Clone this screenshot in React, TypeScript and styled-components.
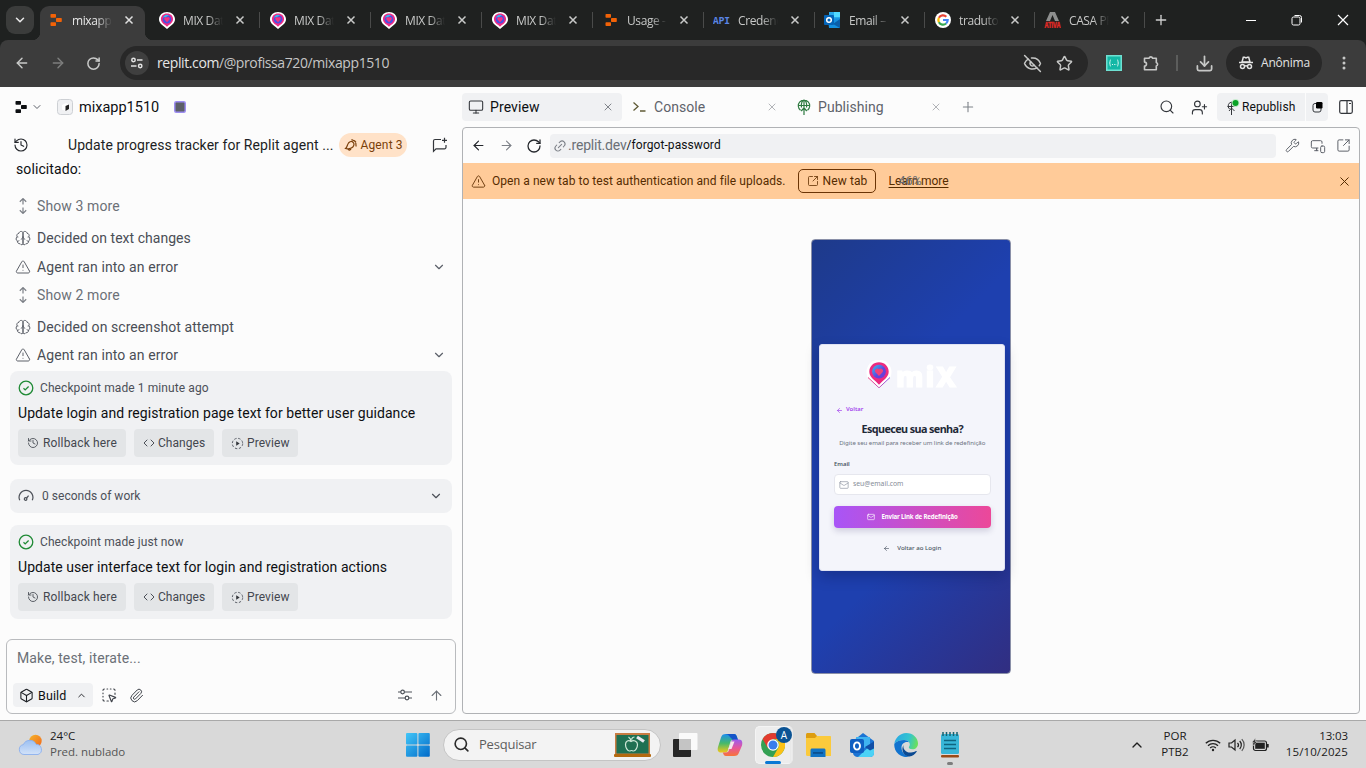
import React from "react";
import styled, { createGlobalStyle } from "styled-components";
import {
  ArrowLeft, ArrowRight, ArrowUp, Box, ChevronDown, ChevronUp, Download, EyeOff, History, Link2, Mail,
  Monitor, MonitorSmartphone, Paperclip, Plus, RotateCw, Search, SquareArrowOutUpRight,
  SquareDashedMousePointer, Star, TriangleAlert, UserPlus, Wrench, X, Code,
} from "lucide-react";

const UI = `Roboto, "Noto Sans", sans-serif`;
const SEGOE = `"Open Sans", "Noto Sans", sans-serif`;

const Global = createGlobalStyle`
  * { box-sizing: border-box; }
  html, body { margin: 0; padding: 0; overflow: hidden; }
  body { font-family: ${UI}; background: #fcfcfc; }
  svg { display: block; flex: none; }
`;

const Screen = styled.div`
  width: 1366px; height: 768px; display: flex; flex-direction: column; background: #fcfcfc; overflow: hidden;
`;
const T = styled.span<{ $s?: number; $c?: string; $ls?: number; $w?: number; $ml?: number; $dy?: number }>`
  font-size: ${p => p.$s ?? 14}px; color: ${p => p.$c ?? "#0d0f12"}; letter-spacing: ${p => p.$ls ?? 0}px;
  font-weight: ${p => p.$w ?? 400}; margin-left: ${p => p.$ml ?? 0}px; margin-top: ${p => p.$dy ?? 0}px;
  white-space: pre; line-height: 1.2; flex: none;
`;
const Spacer = styled.div`flex: 1;`;
const Gap = styled.div<{ $w: number }>`width: ${p => p.$w}px; flex: none;`;

/* ---------- browser chrome ---------- */
const TabStrip = styled.div`
  height: 40px; background: #1f2120; display: flex; align-items: center; flex: none; font-family: ${SEGOE};
`;
const TabSearch = styled.div`
  width: 28px; height: 28px; margin: 0 6px; border-radius: 9px; background: #3b3c3b; display: flex; align-items: center; justify-content: center;
`;
const ActiveTab = styled.div`
  width: 105px; height: 34px; align-self: flex-end; background: #3c3c3c; border-radius: 9px 9px 0 0; display: flex;
  align-items: center; padding: 0 0 6px 8px; position: relative;
  &::before, &::after {
    content: ""; position: absolute; bottom: 0; width: 8px; height: 8px;
  }
  &::before { left: -8px; background: radial-gradient(circle at 0 0, transparent 8px, #3c3c3c 8.5px); }
  &::after { right: -8px; background: radial-gradient(circle at 100% 0, transparent 8px, #3c3c3c 8.5px); }
`;
const Tab = styled.div<{ $w: number }>`
  width: ${p => p.$w}px; height: 28px; display: flex; align-items: center; padding-left: 9px;
`;
const TabTitle = styled.span<{ $on?: boolean }>`
  width: 40px; margin-left: 8px; overflow: hidden; white-space: nowrap; font-size: 12px; line-height: 18px;
  letter-spacing: -0.4px; color: ${p => (p.$on ? "#e8e8e8" : "#c7c8c7")}; padding-top: 1px;
  mask-image: linear-gradient(90deg, #000 60%, transparent 100%);
`;
const TabSep = styled.div`width: 1px; height: 16px; background: #4a4b4a; margin-left: auto;`;
const Toolbar = styled.div`
  height: 47px; background: #1f2120; flex: none; font-family: ${SEGOE};
`;
const ToolbarInner = styled.div`
  height: 47px; background: #3c3c3c; border-radius: 8px 8px 0 0; display: flex; align-items: center; padding: 0 0 1px 14px;
`;
const Omnibox = styled.div`
  width: 968px; height: 34px; border-radius: 17px; background: #282828; display: flex; align-items: center;
  padding: 0 15px 0 5px; margin-left: 17px;
`;
const SiteChip = styled.div`
  width: 24px; height: 24px; border-radius: 12px; background: #3f3f3f; display: flex; align-items: center; justify-content: center;
`;
const Incognito = styled.div`
  width: 96px; height: 34px; border-radius: 17px; background: #282828; display: flex; align-items: center; padding-left: 12px;
`;

/* ---------- app ---------- */
const Body = styled.div`height: 633px; display: flex; flex: none; background: #fcfcfc;`;
const Left = styled.div`width: 462px; display: flex; flex-direction: column; flex: none;`;
const Right = styled.div`flex: 1; display: flex; flex-direction: column;`;
const TopBar = styled.div`height: 40px; display: flex; align-items: center; flex: none;`;
const ChatHeader = styled.div`height: 34px; display: flex; align-items: center; padding: 2px 14px 0 13px; flex: none;`;
const AgentBadge = styled.div`
  height: 24px; width: 68px; border-radius: 12px; background: #ffe2c8; display: flex; align-items: center; padding-left: 5px; margin-left: 6px;
`;
const Line = styled.div`height: 16px; padding-left: 16px; display: flex; align-items: center; flex: none;`;
const FeedRow = styled.div<{ $mt: number }>`
  height: 24px; margin-top: ${p => p.$mt}px; padding: 0 16px 0 15px; display: flex; align-items: center; flex: none; color: #5c6069;
`;
const Card = styled.div<{ $mt: number }>`
  width: 442px; height: 94px; margin: ${p => p.$mt}px 0 0 10px; border-radius: 8px; background: #f0f1f3; padding: 8px;
  display: flex; flex-direction: column; flex: none;
`;
const CardHead = styled.div`height: 18px; display: flex; align-items: center;`;
const CardTitle = styled.div`height: 20px; margin-top: 6px; display: flex; align-items: center;`;
const CardActions = styled.div`height: 28px; margin-top: 6px; display: flex; gap: 8px;`;
const ActionButton = styled.div<{ $w: number }>`
  width: ${p => p.$w}px; height: 28px; border-radius: 4px; background: #e3e5e7; display: flex; align-items: center;
  padding-left: 9px; color: #4c5058;
`;
const WorkCard = styled.div`
  width: 442px; height: 34px; margin: 14px 0 0 10px; border-radius: 8px; background: #f0f1f3; display: flex; align-items: center;
  padding: 0 9px 0 8px; flex: none; color: #4c5058;
`;
const Composer = styled.div`
  width: 450px; height: 75px; margin: 20px 0 0 6px; border: 1px solid #b9bbbe; border-radius: 6px; padding: 10px 11px 6px 6px;
  display: flex; flex-direction: column; justify-content: space-between; flex: none;
`;
const ComposerBar = styled.div`height: 24px; display: flex; align-items: center; color: #3f434a;`;
const BuildButton = styled.div`
  width: 80px; height: 24px; border-radius: 4px; background: #f0f1f3; display: flex; align-items: center; padding-left: 6px; color: #1c1f24;
`;
const PaneTab = styled.div<{ $on?: boolean; $w: number; $p: number }>`
  width: ${p => p.$w}px; height: 28px; border-radius: 4px; background: ${p => (p.$on ? "#f0f1f3" : "transparent")};
  display: flex; align-items: center; padding: 0 ${p => p.$p}px 0 6px; color: ${p => (p.$on ? "#33363b" : "#a4a7ab")};
`;
const Publish = styled.div<{ $w: number; $side: "l" | "r" }>`
  width: ${p => p.$w}px; height: 28px; background: #f0f1f3; display: flex; align-items: center; color: #0d0f12;
  border-radius: ${p => (p.$side === "l" ? "4px 0 0 4px" : "0 4px 4px 0")}; padding-left: ${p => (p.$side === "l" ? 9 : 6)}px;
`;
const Pane = styled.div`
  width: 898px; height: 587px; border: 1px solid #b0b2b5; border-radius: 4px; display: flex; flex-direction: column; overflow: hidden;
`;
const PaneBar = styled.div`height: 35px; display: flex; align-items: center; padding: 0 8px; flex: none; color: #24272c;`;
const Address = styled.div`
  width: 726px; height: 24px; border-radius: 4px; background: #f0f1f3; display: flex; align-items: center; padding-left: 3px; color: #7d8188;
`;
const LinkGlyph = styled(Link2)`transform: rotate(-45deg);`;
const Banner = styled.div`
  height: 36px; background: #ffcb99; display: flex; align-items: center; padding: 0 7px 0 8px; color: #6b3a0c; flex: none;
`;
const NewTab = styled.div`
  width: 78px; height: 24px; border: 1px solid #6b3405; border-radius: 5px; display: flex; align-items: center; padding-left: 8px; margin-left: 12px;
`;
const Learn = styled.div`
  position: relative; margin: 1px 0 0 13px; text-decoration: underline; color: #562c00; text-underline-offset: 2px; height: 16px; display: flex;
`;
const ZoomLabel = styled.span`
  position: absolute; left: 10px; top: -1px; font-size: 12.5px; line-height: 16px; color: #6a6e75; display: inline-block;
`;
const Stage = styled.div`flex: 1; padding: 40px 0 0 348px;`;

/* ---------- phone preview ---------- */
const Phone = styled.div`
  width: 200px; height: 435px; border-radius: 4px; border: 1px solid #8a90a8; padding: 104px 5px 0 7px;
  background: linear-gradient(135deg, #1e3a8a 0%, #1e40af 36%, #1e40af 64%, #312e81 100%);
  font-family: "Noto Sans", sans-serif;
`;
const FormCard = styled.div`
  width: 186px; height: 227px; border-radius: 3px; background: #f4f5fb; border: 1px solid #dfe2f2; padding: 14px 13.5px 0 14px;
  display: flex; flex-direction: column; box-shadow: 0 6px 14px rgba(10, 15, 60, .28);
`;
const LogoRow = styled.div`height: 32px; display: flex; align-items: center; padding-left: 32px;`;
const Wordmark = styled.span`
  font-family: "Open Sans", sans-serif; font-weight: 800; font-size: 29px; line-height: 30px; color: #fff; margin: 1px 0 0 4px;
  letter-spacing: 2px; -webkit-text-stroke: 1px #fff; transform: scaleX(.95); transform-origin: left;
`;
const BackRow = styled.div`height: 10px; margin-top: 14px; display: flex; align-items: center; color: #a344ee; padding-left: 2px;`;
const FormRow = styled.div<{ $mt: number; $h: number; $left?: boolean }>`
  height: ${p => p.$h}px; margin-top: ${p => p.$mt}px; display: flex; align-items: center; justify-content: ${p => (p.$left ? "flex-start" : "center")}; color: #4b5563;
`;
const Field = styled.div`
  height: 21px; margin-top: 4px; border: 1px solid #e6e7ee; border-radius: 4px; background: #fff; display: flex; align-items: center; padding-left: 4px; color: #8c93a0;
`;
const Submit = styled.div`
  height: 22px; margin-top: 11px; border-radius: 4px; background: linear-gradient(90deg, #a855f7, #ec4899); display: flex; align-items: center;
  padding-left: 33px; color: #fff; box-shadow: 0 3px 6px rgba(40, 30, 90, .18);
`;

/* ---------- taskbar ---------- */
const Taskbar = styled.div`
  height: 48px; background: #d9d9d9; border-top: 1px solid #a9a9a9; display: flex; align-items: center; flex: none; font-family: ${SEGOE};
`;
const Stack = styled.div<{ $w: number; $a: string }>`
  width: ${p => p.$w}px; display: flex; flex-direction: column; align-items: ${p => p.$a}; gap: 2px; margin-top: -2px; flex: none;
`;
const SearchPill = styled.div`
  width: 218px; height: 32px; border-radius: 16px; background: #f3f3f3; border: 1px solid #c4c4c4; margin-left: 13px; display: flex; align-items: center; padding: 0 9px 0 9px; flex: none;
`;
const ChromeSlot = styled.div`
  width: 38px; height: 38px; border-radius: 5px; background: #ededed; border: 1px solid #f4f4f4; border-right: 3px double #e9e9e9;
  margin-left: 12px; position: relative; display: flex; align-items: center; justify-content: center; flex: none;
`;
const Indicator = styled.div<{ $w: number; $c: string }>`
  position: absolute; bottom: -1px; left: calc(50% - ${p => p.$w / 2}px); width: ${p => p.$w}px; height: 3px; border-radius: 2px; background: ${p => p.$c};
`;
const Badge = styled.div`
  position: absolute; left: 20px; top: 0; width: 16px; height: 16px; border-radius: 8px; background: #0b5394; color: #fff;
  font-size: 10px; line-height: 16px; text-align: center;
`;
const NoteSlot = styled.div`position: relative; width: 24px; height: 38px; margin-left: 20px; display: flex; align-items: center; justify-content: center;`;

/* ---------- drawings ---------- */
const ReplitMark = ({ c, s = 12 }: { c: string; s?: number }) => (
  <svg width={s} height={s} viewBox="0 0 12 12" fill={c}>
    <rect x="0.5" y="0" width="5.5" height="3.8" rx=".7" /><rect x="6" y="4.1" width="5.8" height="3.8" rx=".7" /><rect x="0.5" y="8.2" width="5.5" height="3.8" rx=".7" />
  </svg>
);
const MixPin = () => (
  <svg width="16" height="17" viewBox="0 0 16 17">
    <path d="M8 0C3.5 0 0 3.200 0 7.200c0 3.500 2.500 5.400 5 7.300L8 17l3-2.500c2.500-1.900 5-3.800 5-7.300C16 3.200 12.500 0 8 0z" fill="#fff" />
    <path d="M8 1.600C4.500 1.600 1.900 4 1.900 7.200c0 2.700 2 4.200 4.200 5.900L8 14.800l1.900-1.700c2.200-1.700 4.200-3.200 4.200-5.900C14.100 4 11.500 1.600 8 1.600z" fill="#ee2a86" />
    <circle cx="8" cy="7.2" r="4.300" fill="#4b4fe0" />
    <path d="M4 5.600A4.300 4.300 0 0 1 10 3.300L7 5z" fill="#36b8ee" />
    <path d="M8 10.200 5.500 7.600A1.500 1.500 0 0 1 8 5.800a1.500 1.500 0 0 1 2.500 1.800z" fill="#f5337f" />
  </svg>
);
const BigPin = () => (
  <svg width="26" height="30" viewBox="0 0 26 30">
    <defs>
      <linearGradient id="ring" x1="0" y1="0" x2="1" y2="1"><stop offset="0" stopColor="#35c5ee" /><stop offset=".55" stopColor="#5a4be0" /><stop offset="1" stopColor="#7a2fd0" /></linearGradient>
      <linearGradient id="edge"><stop offset="0" stopColor="#f0307c" /><stop offset=".5" stopColor="#c65fb8" /><stop offset="1" stopColor="#7a4ee8" /></linearGradient>
    </defs>
    <circle cx="13" cy="12" r="12.5" fill="#fff" />
    <path d="M2 17.500 13 27.800l11-10.300" fill="#fff" stroke="url(#edge)" strokeWidth="1" />
    <path d="M13 2.200C7.400 2.200 3.300 6.400 3.300 11.600c0 4.800 3.500 7.400 6.500 9.800L13 24.700l3.200-3.300c3-2.400 6.500-5 6.500-9.800C22.700 6.400 18.600 2.200 13 2.200z" fill="#ec2b80" />
    <circle cx="13" cy="11.600" r="6.900" fill="url(#ring)" />
    <path d="m13 16-3.800-4A2.400 2.400 0 0 1 13 9.200a2.400 2.400 0 0 1 3.800 2.800z" fill="#f0407c" />
  </svg>
);
const CloseX = ({ c = "#c9cac9" }: { c?: string }) => (
  <svg width="10" height="10" viewBox="0 0 10 10"><path d="M1.500 1.500l7 7M8.500 1.500l-7 7" stroke={c} strokeWidth="1.5" /></svg>
);
const OutlookFav = () => (
  <svg width="17" height="16" viewBox="0 0 17 16">
    <path d="M5 0h11v9H5z" fill="#28a8ea" /><path d="M10 0h6v5h-6z" fill="#50d9ff" /><path d="M4 7l12-1v9a1 1 0 0 1-1 1H5z" fill="#1490df" /><path d="m16 7-7 5 7 4z" fill="#0a5ea8" />
    <rect x="0" y="3" width="10" height="10" rx="1" fill="#0364b8" /><circle cx="5" cy="8" r="2.3" fill="none" stroke="#fff" strokeWidth="1.5" />
  </svg>
);
const GoogleFav = () => (
  <svg width="16" height="16" viewBox="0 0 16 16">
    <circle cx="8" cy="8" r="8" fill="#fff" />
    <g fill="none" strokeWidth="2.2"><path d="M11.300 4.700A4.700 4.700 0 0 0 3.900 5.800" stroke="#ea4335" /><path d="M3.900 5.800a4.700 4.700 0 0 0 0 4.400" stroke="#fbbc05" /><path d="M3.900 10.200a4.700 4.700 0 0 0 7.200 1.300" stroke="#34a853" /><path d="M11.100 11.500A4.700 4.700 0 0 0 12.700 8H8" stroke="#4285f4" /></g>
  </svg>
);
const AtivaFav = () => (
  <svg width="17" height="16" viewBox="0 0 17 16">
    <path d="M6 0h5l4 9h-4l-2.500-6L6 9H2z" fill="#8d8f8e" />
    <text x="0.500" y="15.500" fontFamily="Liberation Sans, sans-serif" fontWeight="700" fontSize="9.500" textLength="16" lengthAdjust="spacingAndGlyphs" fill="#e02a26" stroke="#e02a26" strokeWidth=".6">ATIVA</text>
  </svg>
);
const ApiFav = () => (
  <svg width="17" height="12" viewBox="0 0 17 12">
    <text x="0" y="10" fontFamily="Liberation Mono, monospace" fontWeight="700" fontSize="11.500" textLength="17" lengthAdjust="spacingAndGlyphs" fill="#5a86e8">API</text>
  </svg>
);
const SiteInfo = () => (
  <svg width="14" height="14" viewBox="0 0 14 14" fill="none" stroke="#e3e3e3" strokeWidth="1.5"><circle cx="3.5" cy="4" r="1.7" /><path d="M7 4h5.500M1 10h5.500" /><circle cx="10.2" cy="10" r="1.7" /></svg>
);
const Spy = () => (
  <svg width="16" height="16" viewBox="0 0 16 16" fill="none" stroke="#e3e3e3" strokeWidth="1.5">
    <path d="M1 7.500h14" /><path d="M4 7 5.300 2.300h1.300L8 3l1.400-.7h1.300L12 7z" /><circle cx="4.5" cy="11.5" r="2" /><circle cx="11.5" cy="11.5" r="2" /><path d="M6.500 11.200c1-.6 2-.6 3 0" />
  </svg>
);
const Extensions = () => (
  <svg width="18" height="18" viewBox="0 0 18 18" fill="none" stroke="#c7c8c7" strokeWidth="1.6"><path d="M2.500 4.200H7a1.900 1.900 0 0 1 3.600 0h3.700v4.300a1.900 1.900 0 0 1 0 3.600v3.600H2.500v-3.600a1.900 1.900 0 0 0 0-4z" strokeLinejoin="round" /></svg>
);
const UpDown = () => (
  <svg width="16" height="16" viewBox="0 0 16 16" fill="none" stroke="#7a7e85" strokeWidth="1.2"><path d="M8 6.500V.7M4.800 3.700 8 .6l3.200 3.100M8 9.500v5.800M4.800 12.300 8 15.400l3.200-3.100" /></svg>
);
const BrainIcon = () => (
  <svg width="16" height="16" viewBox="0 0 16 16" fill="none" stroke="#5c6069" strokeWidth="1">
    <path d="M8 2.700C7.500 1 4.500.8 4 3.200 2 3.500 1.400 5.500 2.100 6.800.6 8 .9 10.300 2.300 11c0 2 1.500 3 2.800 2.700C6 15.300 8 15 8 13.500zM8 2.700c.5-1.700 3.500-1.900 4 .5 2 .3 2.600 2.300 1.900 3.600 1.500 1.200 1.200 3.500-.2 4.200 0 2-1.500 3-2.800 2.700C10 15.300 8 15 8 13.500z" />
    <path d="M5.800 9.300C7 9 7.700 8 8 6.500c.3 1.500 1 2.500 2.200 2.800M2.100 6.800c.4.300.8.400 1.200.3M13.900 6.800c-.4.300-.8.400-1.200.3M2.300 11c.8.200 1.500 0 2-.4M13.700 11c-.8.200-1.500 0-2-.4" />
  </svg>
);
const Check = () => (
  <svg width="16" height="16" viewBox="0 0 16 16" fill="none" stroke="#1f8a35" strokeWidth="1.3"><circle cx="8" cy="8" r="6.8" /><path d="m5.500 8.200 1.700 1.700L10.600 6.500" /></svg>
);
const GaugeIcon = () => (
  <svg width="16" height="16" viewBox="0 0 16 16" fill="none" stroke="#4c5058" strokeWidth="1.2"><path d="M1.800 12.300A6.900 6.900 0 1 1 14.200 12.300" /><circle cx="7.6" cy="11" r="1.300" /><path d="m8.600 10 2-2.300" /></svg>
);
const PlayDashed = () => (
  <svg width="13" height="13" viewBox="0 0 13 13" fill="none" stroke="#5c6069" strokeWidth="1"><circle cx="6.5" cy="6.5" r="5.2" strokeDasharray="2.4 1.7" /><path d="M5.200 4.300v4.400l3.500-2.200z" fill="#33363b" stroke="none" /></svg>
);
const Sliders = () => (
  <svg width="16" height="14" viewBox="0 0 16 14" fill="none" stroke="#4c5058" strokeWidth="1.2"><path d="M1 4h2.800M7.400 4H15M1 10h7M12 10h3" /><circle cx="5.6" cy="4" r="1.8" /><circle cx="10" cy="10" r="1.8" /></svg>
);
const AgentIcon = () => (
  <svg width="14" height="14" viewBox="0 0 14 14" fill="none" stroke="#7a3f0a" strokeWidth="1.2"><path d="M1.500 10.500c2-1.500 1.500-3.500 3-5.500C6 3.200 8 3 9 4.300c1.500 1.200 1.200 3.200-.2 4.700-1.500 1.500-5 2.500-7.300 1.500zM4 11c.5 1.400 2.200 1.500 3 0M7.500 1.500 10.500 3M11.800 5l.3 3.500M10.300 2.500l1.700 2" /></svg>
);
const ChatPlus = () => (
  <svg width="16" height="16" viewBox="0 0 16 16" fill="none" stroke="#33363b" strokeWidth="1.2"><path d="M9 2.500H3A1.500 1.500 0 0 0 1.500 4v10.300L4 11.800h8.500a1.500 1.500 0 0 0 1.500-1.500V8M12.500.8v5M10 3.300h5" /></svg>
);
const Prompt = () => (
  <svg width="15" height="14" viewBox="0 0 15 14" fill="none" stroke="#5f5a35" strokeWidth="1.3"><path d="m1.500 2.500 4.500 4-4.500 4M8 11h5.500" /></svg>
);
const GlobeTree = () => (
  <svg width="16" height="16" viewBox="0 0 16 16" fill="none" stroke="#2e7a40" strokeWidth="1.2"><path d="M4.500 11.300A5.700 5.700 0 1 1 11.500 11.300M2.500 6.500h11M5.500 8.500C4.800 5 6 1.500 8 1.200c2 .3 3.200 3.800 2.500 7.300M8 1v15M5.200 12 8 9l2.800 3" /></svg>
);
const PanelIcon = () => (
  <svg width="14" height="14" viewBox="0 0 14 14" fill="none" stroke="#33363b" strokeWidth="1.2"><rect x=".7" y=".7" width="12.6" height="12.6" rx="1.5" /><path d="M8 1v12M10 3.500h2" /></svg>
);
const Weather = () => (
  <svg width="26" height="22" viewBox="0 0 26 22">
    <defs><linearGradient id="cloud" x1="0" y1="0" x2="0" y2="1"><stop offset="0" stopColor="#9cc0f2" /><stop offset="1" stopColor="#d3e2f8" /></linearGradient><linearGradient id="sun" x1="0" y1="0" x2="1" y2="1"><stop offset="0" stopColor="#f5b52a" /><stop offset="1" stopColor="#f2661c" /></linearGradient></defs>
    <circle cx="17.5" cy="7" r="6.2" fill="url(#sun)" />
    <path d="M6 20.500a5 5 0 0 1-.6-9.900 7 7 0 0 1 12.800-.2A5.200 5.200 0 0 1 20 20.500z" fill="url(#cloud)" stroke="#8bb0ee" strokeWidth=".9" />
  </svg>
);
const WinLogo = () => (
  <svg width="24" height="24" viewBox="0 0 24 24">
    <defs><linearGradient id="win" gradientUnits="userSpaceOnUse" x1="0" y1="0" x2="24" y2="24"><stop offset="0" stopColor="#42c6f8" /><stop offset="1" stopColor="#0069c8" /></linearGradient></defs>
    <g fill="url(#win)"><rect x="0" y="0" width="11.4" height="11.4" rx="1" /><rect x="12.4" y="0" width="11.4" height="11.4" rx="1" /><rect x="0" y="12.4" width="11.4" height="11.4" rx="1" /><rect x="12.4" y="12.4" width="11.4" height="11.4" rx="1" /></g>
  </svg>
);
const Board = () => (
  <svg width="37" height="24" viewBox="0 0 37 24">
    <rect x="1" y="0" width="35" height="22" fill="#c87c42" /><rect x="2.5" y="2" width="32" height="18.5" fill="#1f7052" /><rect x="0" y="21" width="37" height="3" rx="1" fill="#b3690f" />
    <path d="M17 8.500c-2.500-2-5.500-.5-5.500 3 0 3 2 6.500 4 6.500 1 0 1.200-.5 2-.5s1 .5 2 .5c2 0 4-3.500 4-6.500 0-3.500-4-5-6.500-3zM17 8.500c0-2-1-3.500-2.500-4.500M17.500 6.500c.5-2 1.500-2.500 3-2.500" fill="none" stroke="#cfe8d8" strokeWidth="1.2" />
    <path d="m23 4 7 4.500" stroke="#e8e8ee" strokeWidth="3.2" />
  </svg>
);
const TaskView = () => (
  <svg width="25" height="24" viewBox="0 0 25 24"><rect x="0" y="6" width="18" height="18" rx="1" fill="#262626" /><rect x="6" y="0" width="18.5" height="17" rx="1" fill="#fafafa" /><rect x="6" y="6" width="12" height="11" fill="#c4c4c4" /></svg>
);
const Copilot = () => (
  <svg width="26" height="24" viewBox="0 0 26 24">
    <defs>
      <linearGradient id="cpA" x1="0" y1="0" x2="0" y2="1"><stop offset="0" stopColor="#1b8ff0" /><stop offset=".5" stopColor="#45b96b" /><stop offset="1" stopColor="#f3c818" /></linearGradient>
      <linearGradient id="cpB" x1="0" y1="0" x2="0" y2="1"><stop offset="0" stopColor="#9a5cf0" /><stop offset=".5" stopColor="#e6569c" /><stop offset="1" stopColor="#f87438" /></linearGradient>
    </defs>
    <path d="M9 1h8c2 0 2.500 1.500 3 3l1 3h-5c-2 0-2.500 1-3 3l-2 7c-.6 2-1.400 2.500-3 2.500H4C.8 19.500.2 17 1 14L4 4.500C4.800 2 6 1 9 1z" fill="url(#cpA)" />
    <path d="M8 1h9c2 0 2.500 1.500 3 3l1 3h-5l-3-3c-1-2-3-3-5-3z" fill="#1554c8" />
    <path d="M17 23H9c-2 0-2.500-1.500-3-3l-.2-.5H9c2 0 2.600-1 3-2.500l2-7c.6-2 1.400-3.500 3-3.500h5c3.200 0 3.800 3 3 6L22 19.500c-.8 2.500-2 3.500-5 3.500z" fill="url(#cpB)" />
    <path d="M14.300 8.500h3.200l-3 7.500h-3.200z" fill="#f5e4ec" />
  </svg>
);
const ChromeLogo = () => (
  <svg width="24" height="24" viewBox="0 0 24 24">
    <circle cx="12" cy="12" r="12" fill="#34a053" /><path d="M12 0a12 12 0 0 1 10.400 6H12L6.800 15 1.600 6A12 12 0 0 1 12 0z" fill="#e33b2e" /><path d="M22.400 6A12 12 0 0 1 12 24l5.200-9A6 6 0 0 0 12 6z" fill="#fbc116" />
    <circle cx="12" cy="12" r="5.8" fill="#fff" /><circle cx="12" cy="12" r="4.5" fill="#3a7cec" />
  </svg>
);
const Folder = () => (
  <svg width="25" height="24" viewBox="0 0 25 24"><path d="M0 1.500C0 .7.7 0 1.500 0h7L11 3v5H0z" fill="#dd9d10" /><path d="M0 5h9l2-2h13c.6 0 1 .4 1 1v19H1.500A1.500 1.500 0 0 1 0 21.500z" fill="#fbca3c" /><path d="M4.500 17c0-.8.7-1.500 1.500-1.500h12c.8 0 1.500.7 1.500 1.500v7h-15z" fill="#1173c4" /><rect x="7" y="19" width="10" height="1.8" fill="#0b508f" /></svg>
);
const OutlookBig = () => (
  <svg width="25" height="24" viewBox="0 0 25 24"><path d="M3 8 13 0l11 8v12c0 2-1.500 4-4 4H8c-3 0-5-2-5-4z" fill="#1c74d4" /><path d="M6 4h14v8L8 18z" fill="#3fb3f0" /><path d="M24 9v11a4 4 0 0 1-4 4H8z" fill="#4bd2f6" /><path d="M24 8.500 15 14l5 3.500 4-2z" fill="#114fa6" /><rect x="0" y="6" width="14" height="14" rx="2" fill="#0f5fc2" /><ellipse cx="7" cy="13" rx="3" ry="3.6" fill="none" stroke="#fff" strokeWidth="1.9" /></svg>
);
const EdgeLogo = () => (
  <svg width="24" height="24" viewBox="0 0 24 24">
    <defs><linearGradient id="eg" x1="0" y1=".3" x2="1" y2=".5"><stop offset="0" stopColor="#2aa9e4" /><stop offset=".6" stopColor="#33c4cf" /><stop offset="1" stopColor="#6be05a" /></linearGradient></defs>
    <path d="M.3 11C1 5 6 0 12.200 0 19 0 24 5 24 10.500c0 3.500-2.500 5.800-5.500 5.800-3 0-4-1.300-3.600-2.300.3-.6.9-1.300.9-2.500 0-2.500-2.300-4.500-5.600-4.500C6 7 2 8.500.3 11z" fill="url(#eg)" />
    <path d="M.3 11C2 8.500 6 7 10.200 7c2 0 3.800.9 4.800 2.200-4-1.200-7.500 1.300-7.500 5.300 0 4.500 3.500 8.500 8 9A12 12 0 0 1 .3 11z" fill="#1173cf" />
    <path d="M9.500 12c-1 4.500 3 8 7.500 7.500 2 0 4-.9 5-1.500.7-.3 1 .3.6.8C21 21.500 18.500 23.300 15.500 23.500 10 23.500 6.500 17 9.500 12z" fill="#0c4a92" />
  </svg>
);
const Notepad = () => (
  <svg width="20" height="26" viewBox="0 0 20 26"><rect x="1" y="2" width="18" height="20" rx="1.5" fill="#38b6d8" /><path d="M3 0v4M6.500 0v4M10 0v4M13.500 0v4M17 0v4" stroke="#17616f" strokeWidth="1.5" /><path d="M4 8.500h12M4 12.500h12M4 16.500h12" stroke="#0f6480" strokeWidth="1.6" /><rect x="1" y="23" width="18" height="2.5" rx="1" fill="#9a4b18" /></svg>
);
const Wifi = () => (
  <svg width="16" height="14" viewBox="0 0 16 14" fill="none" stroke="#222" strokeWidth="1.3"><path d="M.8 5.300a10.200 10.200 0 0 1 14.400 0M3 7.700a7.100 7.100 0 0 1 10 0M5.200 10a4 4 0 0 1 5.600 0" /><circle cx="8" cy="12" r="1.2" fill="#222" stroke="none" /></svg>
);
const Speaker = () => (
  <svg width="17" height="14" viewBox="0 0 17 14" fill="none" stroke="#222" strokeWidth="1.2"><path d="M1 5v4h2.500L7 12V2L3.500 5zM9.500 4.800a3.200 3.200 0 0 1 0 4.400M11.700 3a5.800 5.800 0 0 1 0 8" /><path d="M13.800 1.200a8.400 8.400 0 0 1 0 11.600" stroke="#555" /></svg>
);
const Battery = () => (
  <svg width="17" height="14" viewBox="0 0 17 14"><rect x="1.5" y="3" width="13" height="9.5" rx="2" fill="none" stroke="#222" strokeWidth="1.2" /><rect x="3.2" y="4.7" width="9.600" height="6.100" fill="#222" /><rect x="15" y="6" width="1.7" height="3.5" fill="#222" /><path d="M3.500 0 0 4.500h2.200L1.500 8 5 3.500H3z" fill="#222" stroke="#d9d9d9" strokeWidth=".5" /></svg>
);

/* ---------- composed parts ---------- */
const tabs = [
  { icon: <MixPin />, t: "MIX Data", w: 111 }, { icon: <MixPin />, t: "MIX Data", w: 111 }, { icon: <MixPin />, t: "MIX Data", w: 111 },
  { icon: <MixPin />, t: "MIX Data", w: 111 }, { icon: <ReplitMark c="#f26207" />, t: "Usage - R", w: 111 }, { icon: <ApiFav />, t: "Credenciais", w: 111 },
  { icon: <OutlookFav />, t: "Email – ", w: 110 }, { icon: <GoogleFav />, t: "tradutor", w: 110 }, { icon: <AtivaFav />, t: "CASA PRO", w: 110 },
];
const IconBox = styled.div<{ $w: number }>`width: ${p => p.$w}px; display: flex; justify-content: center; flex: none;`;

const Checkpoint = ({ mt, when, title, ls }: { mt: number; when: string; title: string; ls: number }) => (
  <Card $mt={mt}>
    <CardHead><Check /><T $s={12} $c="#4c5058" $ml={6} $ls={0.09}>Checkpoint made {when}</T></CardHead>
    <CardTitle><T $ls={ls}>{title}</T></CardTitle>
    <CardActions>
      <ActionButton $w={108}><History size={12} strokeWidth={1.8} /><T $s={12} $c="#43474f" $ml={4} $ls={0.15}>Rollback here</T></ActionButton>
      <ActionButton $w={80}><Code size={12} strokeWidth={2} /><T $s={12} $c="#43474f" $ml={3} $ls={0.05}>Changes</T></ActionButton>
      <ActionButton $w={76}><PlayDashed /><T $s={12} $c="#43474f" $ml={3} $ls={0.1}>Preview</T></ActionButton>
    </CardActions>
  </Card>
);

export default function App() {
  return (
    <Screen>
      <Global />
      <TabStrip>
        <TabSearch><ChevronDown size={14} color="#e8e8e8" strokeWidth={2.6} /></TabSearch>
        <ActiveTab><IconBox $w={16}><ReplitMark c="#f26207" /></IconBox><TabTitle $on>mixapp1510</TabTitle><Gap $w={12} /><CloseX c="#e0e0e0" /></ActiveTab>
        <Gap $w={4} />
        {tabs.map((t, i) => (
          <Tab key={i} $w={t.w}><IconBox $w={17}>{t.icon}</IconBox><TabTitle>{t.t}</TabTitle><Gap $w={t.w === 110 ? 11 : 12} /><CloseX /><TabSep /></Tab>
        ))}
        <Gap $w={8} /><Plus size={16} color="#d0d0d0" strokeWidth={2} />
        <Spacer />
        <svg width="12" height="12"><path d="M1 6.500h10" stroke="#fff" /></svg>
        <Gap $w={34} />
        <svg width="12" height="12" viewBox="0 0 12 12" fill="none" stroke="#fff"><rect x="1" y="3" width="8" height="8" rx="1.5" /><path d="M3.500 1.500h5a2 2 0 0 1 2 2v5" /></svg>
        <Gap $w={34} />
        <svg width="12" height="12" viewBox="0 0 12 12" stroke="#fff" strokeWidth="1.2"><path d="m1 1 10 10M11 1 1 11" /></svg>
        <Gap $w={17} />
      </TabStrip>
      <Toolbar>
        <ToolbarInner>
          <ArrowLeft size={16} color="#c9cac9" strokeWidth={2.2} /><Gap $w={20} />
          <ArrowRight size={16} color="#7d7e7d" strokeWidth={2.2} /><Gap $w={20} />
          <RotateCw size={15} color="#c9cac9" strokeWidth={2.4} />
          <Gap $w={2} />
          <Omnibox>
            <SiteChip><SiteInfo /></SiteChip>
            <T $ml={8} $c="#e6e6e6" $ls={-0.4}>replit.com</T><T $c="#c6c6c6" $ls={-0.4}>/@profissa720/mixapp1510</T>
            <Spacer />
            <EyeOff size={19} color="#c7c8c7" strokeWidth={1.9} /><Gap $w={14} /><Star size={17} color="#c7c8c7" strokeWidth={2.1} />
          </Omnibox>
          <Gap $w={18} />
          <svg width="16" height="16" viewBox="0 0 16 16"><rect width="16" height="16" fill="#14b8a6" /><rect x=".75" y=".75" width="14.5" height="14.5" fill="none" stroke="#6fe0d2" strokeWidth="1.5" /><path d="M5 5c-1 0-1 .5-1 1.500S4 8 3.200 8C4 8 4 8.500 4 9.500S4 11 5 11M11 5c1 0 1 .5 1 1.500S12 8 12.800 8C12 8 12 8.500 12 9.500s0 1.500-1 1.500M6 9.500h1M8 9.500h.8M9.600 9.500h.6" fill="none" stroke="#d9f7f3" /></svg>
          <Gap $w={20} /><Extensions /><Gap $w={16} />
          <svg width="2" height="16"><rect width="2" height="16" fill="#5c5d5c" /></svg>
          <Gap $w={17} /><Download size={19} color="#c7c8c7" strokeWidth={2.2} /><Gap $w={12} />
          <Incognito><Spy /><T $s={12} $c="#e3e3e3" $ml={7} $ls={-0.2}>Anônima</T></Incognito>
          <Spacer />
          <svg width="4" height="14" fill="#c7c8c7"><circle cx="2" cy="2" r="1.5" /><circle cx="2" cy="7" r="1.5" /><circle cx="2" cy="12" r="1.5" /></svg>
          <Gap $w={20} />
        </ToolbarInner>
      </Toolbar>

      <Body>
        <Left>
          <TopBar>
            <Gap $w={15} /><ReplitMark c="#0d0f12" s={12} /><Gap $w={4} /><ChevronDown size={12} color="#5c6069" /><Gap $w={14} />
            <svg width="16" height="16" viewBox="0 0 16 16"><rect x=".5" y=".5" width="15" height="15" rx="3" fill="#f0f1f3" stroke="#cdd0d4" /><path d="m5 6 4-2 3 1.500V10l-3.500 2L5 10.500z" fill="#fff" /><path d="M8.500 7 12 5.500V10l-3.500 2z" fill="#222" /></svg>
            <T $s={14.5} $ml={6} $dy={1}>mixapp1510</T><Gap $w={15} />
            <svg width="12" height="12"><rect x=".75" y=".75" width="10.5" height="10.5" rx="1.5" fill="#5c5f68" stroke="#9d8df2" strokeWidth="1.5" /></svg>
          </TopBar>
          <ChatHeader>
            <History size={16} color="#24272c" strokeWidth={1.7} />
            <T $ml={39} $ls={0.07} $c="#1c1f24">Update progress tracker for Replit agent ...</T>
            <AgentBadge><AgentIcon /><T $s={12} $c="#7a3f0a" $ml={2} $ls={0.15}>Agent 3</T></AgentBadge>
            <Spacer /><ChatPlus />
          </ChatHeader>
          <Line><T $ls={0.1}>solicitado:</T></Line>
          <FeedRow $mt={17}><UpDown /><T $ml={6} $c="#6b7077" $ls={0.1}>Show 3 more</T></FeedRow>
          <FeedRow $mt={8}><BrainIcon /><T $ml={6} $c="#4a4e56" $ls={0.03}>Decided on text changes</T></FeedRow>
          <FeedRow $mt={5}><TriangleAlert size={16} strokeWidth={1.5} /><T $ml={6} $c="#4a4e56" $ls={0.1}>Agent ran into an error</T><Spacer /><ChevronDown size={14} /></FeedRow>
          <FeedRow $mt={4}><UpDown /><T $ml={6} $c="#6b7077" $ls={0.1}>Show 2 more</T></FeedRow>
          <FeedRow $mt={8}><BrainIcon /><T $ml={6} $c="#4a4e56" $ls={0.07}>Decided on screenshot attempt</T></FeedRow>
          <FeedRow $mt={4}><TriangleAlert size={16} strokeWidth={1.5} /><T $ml={6} $c="#4a4e56" $ls={0.1}>Agent ran into an error</T><Spacer /><ChevronDown size={14} /></FeedRow>
          <Checkpoint mt={4} when="1 minute ago" title="Update login and registration page text for better user guidance" ls={0.07} />
          <WorkCard><GaugeIcon /><T $s={12} $c="#4c5058" $ml={8} $ls={0.03}>0 seconds of work</T><Spacer /><ChevronDown size={14} /></WorkCard>
          <Checkpoint mt={12} when="just now" title="Update user interface text for login and registration actions" ls={0.05} />
          <Composer>
            <T $c="#6b7077" $ls={0.12} $ml={4}>Make, test, iterate...</T>
            <ComposerBar>
              <BuildButton><Box size={15} strokeWidth={1.7} /><T $s={12.5} $ml={4} $ls={0.1}>Build</T><Gap $w={10} /><ChevronUp size={11} /></BuildButton>
              <Gap $w={8} /><SquareDashedMousePointer size={16} strokeWidth={1.7} /><Gap $w={12} /><Paperclip size={15} strokeWidth={1.6} />
              <Spacer /><Sliders /><Gap $w={16} /><ArrowUp size={15} color="#6b7077" strokeWidth={1.8} />
            </ComposerBar>
          </Composer>
        </Left>

        <Right>
          <TopBar>
            <PaneTab $on $w={160} $p={8}><Monitor size={16} strokeWidth={1.6} /><T $ml={6} $ls={0.1}>Preview</T><Spacer /><X size={12} color="#6b7077" strokeWidth={1.7} /></PaneTab>
            <Gap $w={4} />
            <PaneTab $w={160} $p={8}><Prompt /><T $ml={7} $c="#5f636b" $ls={0.05}>Console</T><Spacer /><X size={12} strokeWidth={1.7} /></PaneTab>
            <Gap $w={4} />
            <PaneTab $w={160} $p={8}><GlobeTree /><T $ml={6} $c="#5f636b" $ls={0.05}>Publishing</T><Spacer /><X size={12} strokeWidth={1.7} /></PaneTab>
            <Gap $w={10} /><Plus size={16} color="#7d8188" strokeWidth={1.6} />
            <Spacer />
            <Search size={16} color="#33363b" strokeWidth={1.7} /><Gap $w={16} /><UserPlus size={17} color="#33363b" strokeWidth={1.6} /><Gap $w={9} />
            <Publish $w={88} $side="l">
              <svg width="14" height="16" viewBox="0 0 14 16" fill="none" stroke="#33363b"><path d="M3.500 10A4 4 0 0 1 6 3M1.500 7.500h9M5.500 3v13M3 12l2.500-3L8.500 12" /><circle cx="9.5" cy="4" r="4" fill="#c9ecd0" stroke="none" /><circle cx="9.5" cy="4" r="3" fill="#0aa327" stroke="none" /></svg>
              <T $s={12} $ml={2} $ls={0.1}>Republish</T>
            </Publish>
            <Gap $w={1} />
            <Publish $w={22} $side="r"><svg width="11" height="11" viewBox="0 0 11 11"><rect x="1" y="1.5" width="8" height="8.5" rx="2" fill="none" stroke="#33363b" /><rect x="4" y="0" width="6.5" height="6.5" rx="1.2" fill="#000" /></svg></Publish>
            <Gap $w={11} /><PanelIcon /><Gap $w={13} />
          </TopBar>
          <Pane>
            <PaneBar>
              <ArrowLeft size={15} strokeWidth={1.9} /><Gap $w={13} /><ArrowRight size={15} strokeWidth={1.7} color="#7d8188" /><Gap $w={12} /><RotateCw size={16} strokeWidth={1.9} /><Gap $w={8} />
              <Address><LinkGlyph size={14} strokeWidth={1.8} /><T $c="#6b7077" $ml={1} $ls={-0.2}>.replit.dev</T><T $s={12} $ls={0.08}>/forgot-password</T></Address>
              <Gap $w={9} /><Wrench size={15} color="#5f636b" strokeWidth={1.6} /><Gap $w={10} /><MonitorSmartphone size={16} color="#5f636b" strokeWidth={1.5} /><Gap $w={10} /><SquareArrowOutUpRight size={15} color="#5f636b" strokeWidth={1.6} />
            </PaneBar>
            <Banner>
              <TriangleAlert size={15} strokeWidth={1.5} /><T $s={12} $c="#562c00" $ml={6} $ls={0.06}>Open a new tab to test authentication and file uploads.</T>
              <NewTab><SquareArrowOutUpRight size={12} strokeWidth={1.7} /><T $s={12} $c="#562c00" $ml={4} $ls={0.1}>New tab</T></NewTab>
              <Learn><T $s={12} $c="#562c00" $ls={-0.08}>Learn more</T><ZoomLabel>46%</ZoomLabel></Learn>
              <Spacer /><X size={15} strokeWidth={1.6} color="#562c00" />
            </Banner>
            <Stage>
              <Phone>
                <FormCard>
                  <LogoRow><BigPin /><Wordmark>miX</Wordmark></LogoRow>
                  <BackRow><ArrowLeft size={7} strokeWidth={2.4} /><T $s={5.9} $c="#a344ee" $w={600} $ml={3}>Voltar</T></BackRow>
                  <FormRow $mt={7} $h={14}><T $s={10.8} $c="#1f2937" $w={700} $ls={-0.6}>Esqueceu sua senha?</T></FormRow>
                  <FormRow $mt={2} $h={10}><T $s={6.1} $c="#6b7280" $ls={-0.06}>Digite seu email para receber um link de redefinição</T></FormRow>
                  <FormRow $mt={12} $h={10} $left><T $s={5.9} $c="#4b5563" $w={600}>Email</T></FormRow>
                  <Field><Mail size={10} strokeWidth={1.6} /><T $s={6.8} $c="#858b96" $ml={4}>seu@email.com</T></Field>
                  <Submit><Mail size={8} strokeWidth={1.9} /><T $s={6.1} $c="#fff" $w={700} $ml={6.5} $ls={-0.15}>Enviar Link de Redefinição</T></Submit>
                  <FormRow $mt={15} $h={10}><ArrowLeft size={7} strokeWidth={2.2} /><T $s={6.1} $c="#4b5563" $w={500} $ml={7}>Voltar ao Login</T></FormRow>
                </FormCard>
              </Phone>
            </Stage>
          </Pane>
        </Right>
      </Body>

      <Taskbar>
        <Gap $w={18} /><Weather /><Gap $w={6} />
        <Stack $w={100} $a="flex-start"><T $s={11.5} $c="#1a1a1a" $ls={0}>24°C</T><T $s={11.5} $c="#555" $ls={-0.02}>Pred. nublado</T></Stack>
        <Gap $w={256} /><WinLogo />
        <SearchPill><Search size={17} color="#2a2a2a" strokeWidth={2.3} /><T $s={13} $c="#5d5d5d" $ml={9} $ls={-0.2}>Pesquisar</T><Spacer /><Board /></SearchPill>
        <Gap $w={12} /><TaskView /><Gap $w={19} /><Copilot />
        <ChromeSlot><ChromeLogo /><Badge>A</Badge><Indicator $w={16} $c="#0a78d4" /></ChromeSlot>
        <Gap $w={13} /><Folder /><Gap $w={19} /><OutlookBig /><Gap $w={19} /><EdgeLogo />
        <NoteSlot><Notepad /><Indicator $w={6} $c="#7d7d7d" /></NoteSlot>
        <Spacer />
        <ChevronUp size={16} color="#1f1f1f" strokeWidth={2} /><Gap $w={9} />
        <Stack $w={42} $a="center"><T $s={11.5} $c="#1a1a1a" $ls={0}>POR</T><T $s={11.5} $c="#1a1a1a" $ls={0}>PTB2</T></Stack>
        <Gap $w={9} /><Wifi /><Gap $w={7} /><Speaker /><Gap $w={7} /><Battery />
        <Stack $w={79} $a="flex-end"><T $s={11.5} $c="#1a1a1a" $ls={-0.1}>13:03</T><T $s={11.5} $c="#1a1a1a" $ls={0.12}>15/10/2025</T></Stack>
        <Gap $w={18} />
      </Taskbar>
    </Screen>
  );
}
